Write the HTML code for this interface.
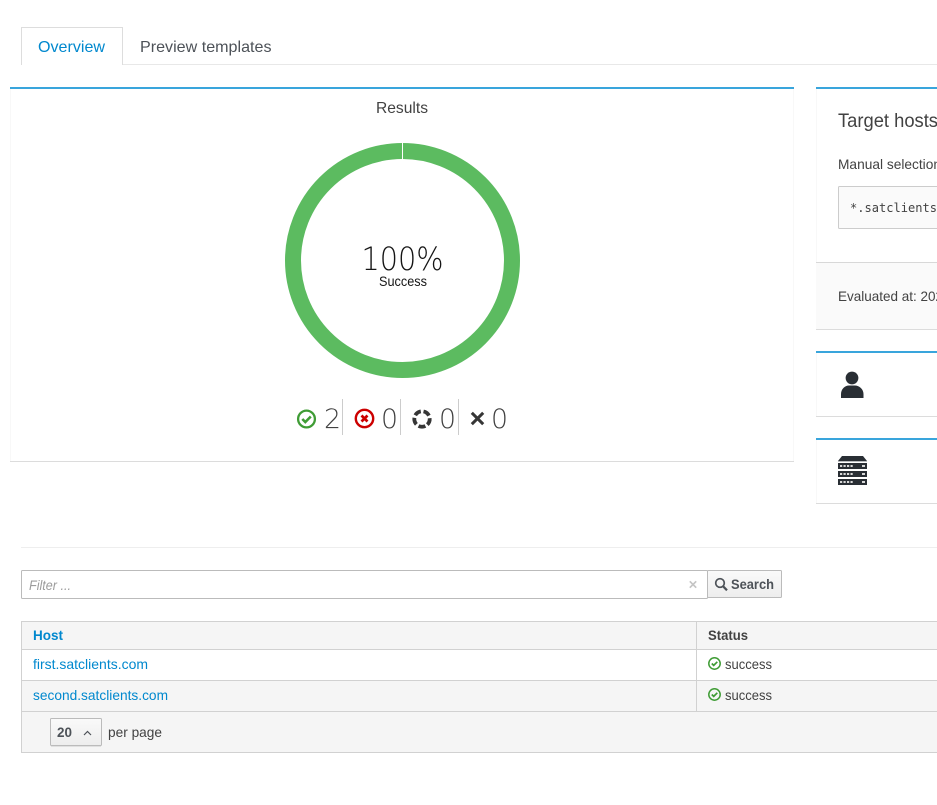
<!DOCTYPE html>
<html><head><meta charset="utf-8"><style>
html,body{margin:0;padding:0;background:#fff;width:937px;height:805px;overflow:hidden}
svg{display:block}
text{font-family:"Liberation Sans",sans-serif;fill:#424242}
.m{font-family:"DejaVu Sans Mono","Liberation Mono",monospace}
.l{font-family:"DejaVu Sans","Liberation Sans",sans-serif;font-weight:200}
</style></head><body>
<svg width="937" height="805" viewBox="0 0 937 805" xmlns="http://www.w3.org/2000/svg">
<defs>
<linearGradient id="b" x1="0" y1="0" x2="0" y2="1"><stop offset="0" stop-color="#fafafa"/><stop offset="1" stop-color="#ededed"/></linearGradient>
<g id="ok"><circle cx="0" cy="0" r="5.7" fill="none" stroke="#3f9c35" stroke-width="1.5"/><path d="M-2.7 0L-0.8 1.900L2.800-1.700" fill="none" stroke="#3f9c35" stroke-width="1.700"/></g>
</defs>

<!-- tabs -->
<path d="M21.500 65V27.500H122.500V65" fill="#fff" stroke="#ddd"/>
<path d="M123 64.500H937" stroke="#e8e8e8"/>
<text x="38" y="52" font-size="16" textLength="67" lengthAdjust="spacingAndGlyphs" style="fill:#0088ce">Overview</text>
<text x="140" y="52" font-size="16" textLength="131.500" lengthAdjust="spacingAndGlyphs" style="fill:#4d5258">Preview templates</text>

<!-- results panel -->
<rect x="10" y="87" width="784" height="375" fill="#fff"/>
<path d="M10.500 89V461" stroke="#f8f8f8"/><path d="M793.500 89V461" stroke="#f8f8f8"/>
<path d="M10 461.500H794" stroke="#dcdcdc"/>
<rect x="10" y="87" width="784" height="2" fill="#39a5dc"/>
<text x="376" y="113" font-size="16" textLength="52" lengthAdjust="spacingAndGlyphs">Results</text>

<circle cx="402.500" cy="260.500" r="109.500" fill="none" stroke="#5cbb60" stroke-width="16"/>
<rect x="402" y="143" width="1" height="16" fill="#fff"/>
<text class="l" x="361.500" y="270" font-size="32" textLength="82" lengthAdjust="spacingAndGlyphs" style="fill:#151515">100%</text>
<text x="379" y="286" font-size="13.500" textLength="48" lengthAdjust="spacingAndGlyphs" style="fill:#151515">Success</text>

<!-- status row -->
<circle cx="306.500" cy="419" r="8.400" fill="none" stroke="#3f9c35" stroke-width="2.300"/>
<path d="M302.300 419L305.300 422L310.800 416.500" fill="none" stroke="#3f9c35" stroke-width="2.600"/>
<text class="l" x="324" y="428" font-size="27" textLength="17" lengthAdjust="spacingAndGlyphs">2</text>
<path d="M342.500 399V435M400.500 399V435M458.500 399V435" stroke="#ccc"/>
<circle cx="364.500" cy="418.500" r="8.700" fill="none" stroke="#c00" stroke-width="2.400"/>
<path d="M361.500 415.500L367.500 421.500M367.500 415.500L361.500 421.500" stroke="#c00" stroke-width="2.700"/>
<text class="l" x="381" y="428" font-size="27" textLength="17" lengthAdjust="spacingAndGlyphs">0</text>
<circle cx="422" cy="419" r="7.700" fill="none" stroke="#363636" stroke-width="3.800" stroke-dasharray="7 2.676" transform="rotate(64 422 419)"/>
<text class="l" x="439" y="428" font-size="27" textLength="17" lengthAdjust="spacingAndGlyphs">0</text>
<path d="M471.800 412.800L483.200 424.200M483.200 412.800L471.800 424.200" stroke="#363636" stroke-width="3"/>
<text class="l" x="491" y="428" font-size="27" textLength="17" lengthAdjust="spacingAndGlyphs">0</text>

<!-- target hosts panel -->
<path d="M816.500 89V329" stroke="#f8f8f8"/>
<rect x="816" y="87" width="121" height="2" fill="#39a5dc"/>
<text x="838" y="127" font-size="19.500" textLength="100" lengthAdjust="spacingAndGlyphs">Target hosts</text>
<text x="838" y="169" font-size="14" textLength="103" lengthAdjust="spacingAndGlyphs">Manual selection</text>
<rect x="838.500" y="186.500" width="110" height="42" rx="1" fill="#fafafa" stroke="#ccc"/>
<text class="m" x="850" y="212" font-size="12" textLength="87" lengthAdjust="spacingAndGlyphs">*.satclients</text>
<rect x="816" y="262" width="121" height="67" fill="#fafafa"/>
<path d="M816 262.500H937" stroke="#d8d8d8"/>
<path d="M816 329.500H937" stroke="#dcdcdc"/>
<text x="838" y="301" font-size="14" textLength="105" lengthAdjust="spacingAndGlyphs">Evaluated at: 202</text>

<!-- user panel -->
<rect x="816" y="351" width="121" height="2" fill="#39a5dc"/>
<path d="M816.500 353V416" stroke="#f8f8f8"/>
<path d="M816 416.500H937" stroke="#dcdcdc"/>
<circle cx="852" cy="378" r="6.400" fill="#292e34"/>
<path d="M841 398V394C841 389 845 385.500 849 385.500H855C859 385.500 863.500 389 863.500 394V398Z" fill="#292e34"/>

<!-- server panel -->
<rect x="816" y="438" width="121" height="2" fill="#39a5dc"/>
<path d="M816.500 440V503" stroke="#f8f8f8"/>
<path d="M816 503.500H937" stroke="#dcdcdc"/>
<path d="M838 461L842 456H863L867 461Z" fill="#292e34"/>
<rect x="838" y="461" width="29" height="1" fill="#b9bcbf"/>
<rect x="838" y="463" width="29" height="6" fill="#292e34"/>
<rect x="838" y="471" width="29" height="6" fill="#292e34"/>
<rect x="838" y="479" width="29" height="6" fill="#292e34"/>
<path d="M840 466H853.500M840 474H853.500M840 482H853.500" stroke="#d8d8d8" stroke-width="2" stroke-dasharray="2.200 1.300"/>
<path d="M862 466H865M862 474H865M862 482H865" stroke="#d8d8d8" stroke-width="2"/>

<!-- divider -->
<path d="M21 547.500H937" stroke="#eee"/>

<!-- filter -->
<rect x="21.500" y="570.500" width="686" height="28" rx="1" fill="#fff" stroke="#bbb"/>
<text x="29" y="590" font-size="13.500" font-style="italic" textLength="42" lengthAdjust="spacingAndGlyphs" style="fill:#9c9c9c">Filter ...</text>
<path d="M689.800 581.300L696.200 587.700M696.200 581.300L689.800 587.700" stroke="#c4c4c4" stroke-width="1.700"/>
<rect x="707.500" y="570.500" width="74" height="27" rx="1" fill="url(#b)" stroke="#bbb"/>
<circle cx="720" cy="583" r="4.300" fill="none" stroke="#4d5258" stroke-width="1.700"/>
<path d="M723 586.200L727 590.300" stroke="#4d5258" stroke-width="2.200"/>
<text x="731" y="589" font-size="13.500" font-weight="bold" textLength="43" lengthAdjust="spacingAndGlyphs" style="fill:#4d5258">Search</text>

<!-- table -->
<rect x="21" y="621" width="916" height="29" fill="#f5f5f5"/>
<rect x="21" y="681" width="916" height="72" fill="#f5f5f5"/>
<path d="M21 621.500H937M21 649.500H937M21 680.500H937M21 711.500H937M21 752.500H937" stroke="#d1d1d1"/>
<path d="M21.500 621V753M696.500 621V711" stroke="#d1d1d1"/>
<text x="33" y="640" font-size="13.500" font-weight="bold" textLength="30" lengthAdjust="spacingAndGlyphs" style="fill:#0088ce">Host</text>
<text x="708" y="640" font-size="13.500" font-weight="bold" textLength="40" lengthAdjust="spacingAndGlyphs">Status</text>
<text x="33" y="669" font-size="14" textLength="115" lengthAdjust="spacingAndGlyphs" style="fill:#0088ce">first.satclients.com</text>
<text x="33" y="700" font-size="14" textLength="135" lengthAdjust="spacingAndGlyphs" style="fill:#0088ce">second.satclients.com</text>
<use href="#ok" x="714.500" y="663.500"/>
<use href="#ok" x="714.500" y="694.500"/>
<text x="725" y="669" font-size="14" textLength="47" lengthAdjust="spacingAndGlyphs">success</text>
<text x="725" y="700" font-size="14" textLength="47" lengthAdjust="spacingAndGlyphs">success</text>

<!-- pagination -->
<rect x="50.500" y="718.500" width="51" height="27" rx="1" fill="url(#b)" stroke="#bbb"/>
<path d="M51 746.500H101" stroke="#e0e0e0"/>
<text x="57" y="737" font-size="14" font-weight="bold" textLength="15" lengthAdjust="spacingAndGlyphs" style="fill:#4d5258">20</text>
<path d="M84 735L87.500 731.500L91 735" fill="none" stroke="#4d5258" stroke-width="1.200"/>
<text x="108" y="737" font-size="14" textLength="54" lengthAdjust="spacingAndGlyphs">per page</text>
</svg>
</body></html>
